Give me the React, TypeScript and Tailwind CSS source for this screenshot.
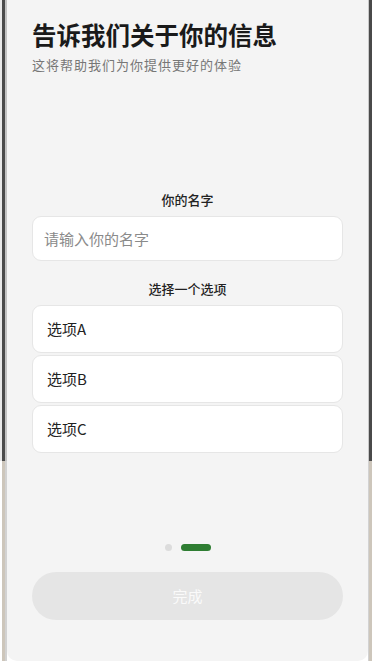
import React, { useState } from 'react';

const font = { fontFamily: '"Noto Sans CJK SC", "Noto Sans", sans-serif' };

const options = ['选项A', '选项B', '选项C'];

const App: React.FC = () => {
    const [name, setName] = useState<string>('');
    const [picked, setPicked] = useState<number | null>(null);

    return (
        <div className="flex flex-row w-[376px] h-[661px] bg-white overflow-hidden" style={font}>
            {/* left phone frame edge */}
            <div className="flex flex-col w-[7px] h-full">
                <div className="flex flex-row h-[461px]">
                    <div className="w-[2px] bg-[#e8e8e8]" />
                    <div className="w-[3px] bg-[#4a4a4a]" />
                    <div className="w-[2px] bg-[#c2c2c2]" />
                </div>
                <div className="flex flex-row flex-1">
                    <div className="w-[2px] bg-white" />
                    <div className="w-[3px] bg-[#cdc6bb]" />
                    <div className="w-[2px] bg-[#d2d2d2]" />
                </div>
            </div>

            {/* sheet */}
            <div className="flex flex-col w-[361px] h-full bg-[#f4f4f4] px-[25px] rounded-bl-[10px] rounded-br-[10px]">
                <h1 className="mt-[20px] text-[24.5px] leading-[30px] font-bold text-[#1a1a1a]">
                    告诉我们关于你的信息
                </h1>
                <p className="mt-[6px] text-[13px] leading-[18px] text-[#777] tracking-[1px]">
                    这将帮助我们为你提供更好的体验
                </p>

                <p className="mt-[117px] text-center text-[13px] leading-[18px] font-medium text-[#222]">
                    你的名字
                </p>
                <input
                    value={name}
                    onChange={(e) => setName(e.target.value)}
                    placeholder="请输入你的名字"
                    className="mt-[7px] h-[45px] w-full rounded-[9px] border border-[#e6e6e6] bg-white px-[11px] text-[15px] text-[#222] placeholder:text-[#8a8a8a] outline-none"
                />

                <p className="mt-[19px] text-center text-[13px] leading-[18px] font-medium text-[#222]">
                    选择一个选项
                </p>
                <div className="mt-[7px] flex flex-col gap-[2px]">
                    {options.map((opt, i) => (
                        <button
                            key={opt}
                            onClick={() => setPicked(i)}
                            className={
                                'h-[48px] w-full rounded-[9px] border bg-white px-[14px] text-left text-[15px] text-[#222] ' +
                                (picked === i ? 'border-[#2e7d32]' : 'border-[#e6e6e6]')
                            }
                        >
                            {opt}
                        </button>
                    ))}
                </div>

                <div className="mt-auto flex flex-row items-center justify-center gap-[9px]">
                    <div className="w-[7px] h-[7px] rounded-full bg-[#dcdcdc]" />
                    <div className="w-[30px] h-[7px] rounded-full bg-[#2e7d32]" />
                </div>

                <button
                    disabled={!name}
                    className="mt-[21px] mb-[41px] h-[48px] w-full rounded-full bg-[#e5e5e5] text-[15px] text-[#fafafa]"
                >
                    完成
                </button>
            </div>

            {/* right phone frame edge */}
            <div className="flex flex-col w-[8px] h-full">
                <div className="flex flex-row h-[461px]">
                    <div className="w-[1px] bg-[#c8c8c8]" />
                    <div className="w-[3px] bg-[#4a4a4a]" />
                    <div className="w-[4px] bg-white" />
                </div>
                <div className="flex flex-row flex-1">
                    <div className="w-[1px] bg-[#d2d2d2]" />
                    <div className="w-[3px] bg-[#cdc6bb]" />
                    <div className="w-[4px] bg-white" />
                </div>
            </div>
        </div>
    );
};

export default App;
